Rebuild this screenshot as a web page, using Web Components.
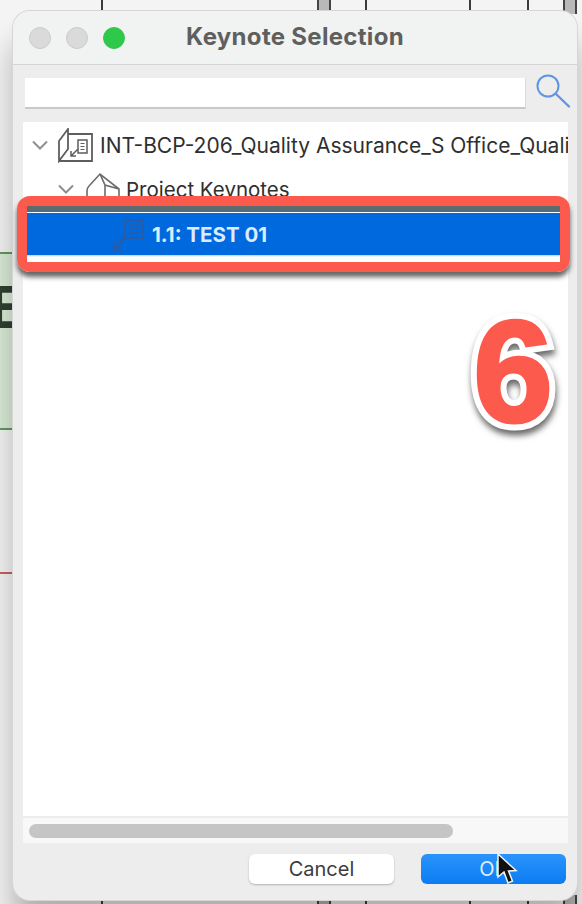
<!doctype html>
<html>
<head>
<meta charset="utf-8">
<title>Keynote Selection</title>
<style>
  html, body { margin: 0; height: 100%; }
  body { font-family: "Inter", "Liberation Sans", sans-serif; overflow: hidden; }
</style>

<template id="backdrop-tpl">
  <style>
    :host { position: absolute; inset: 0; display: block; overflow: hidden; background: #f4f4f4; }
    .v { position: absolute; width: 2px; background: #3b3b3b; }
    .bar { position: absolute; width: 14px; background: #b9b9b9; border: solid #444; border-width: 0 2px; box-sizing: border-box; }
    .top { top: 0; height: 14px; }
    .bot { top: 895px; height: 9px; }
    .green { position: absolute; left: 0; top: 252px; width: 13px; height: 178px; box-sizing: border-box; overflow: hidden;
      background: #d9ecd6; border: solid #5f9a5c; border-width: 2px 0; }
    .e { position: absolute; left: -11px; top: 22px; font: 700 62px/62px "Liberation Sans", sans-serif; color: #2f4030; }
    .red { position: absolute; left: 0; top: 572px; width: 13px; height: 2px; background: #c9605c; }
  </style>
  <div class="v top" style="left:101px"></div>
  <div class="bar top" style="left:317px"></div>
  <div class="v top" style="left:365px"></div>
  <div class="v top" style="left:469px"></div>
  <div class="v top" style="left:527px"></div>
  <div class="bar top" style="left:563px"></div>
  <div class="green"><div class="e">E</div></div>
  <div class="red"></div>
  <div class="v bot" style="left:101px"></div>
  <div class="bar bot" style="left:317px"></div>
  <div class="v bot" style="left:365px"></div>
  <div class="v bot" style="left:469px"></div>
  <div class="v bot" style="left:527px"></div>
  <div class="bar bot" style="left:563px"></div>
</template>

<template id="title-tpl">
  <style>
    :host { display: flex; align-items: center; height: 53px; padding-left: 16px; position: relative;
      background: #f1f2f2; border-bottom: 1px solid #d5d5d5; border-radius: 17px 17px 0 0; }
    .light { width: 22px; height: 22px; border-radius: 50%; background: #dadada; border: 1px solid #cbcbcb;
      box-sizing: border-box; margin-right: 15px; }
    .light.on { background: #2ec84a; border-color: #37c552; }
    .name { position: absolute; left: 0; right: 0; top: 0; height: 53px; text-align: center;
      font: 700 24px/51px "Inter", "Liberation Sans", sans-serif; letter-spacing: .3px; color: #5f5f5f; }
  </style>
  <div class="light"></div><div class="light"></div><div class="light on"></div>
  <div class="name"><slot></slot></div>
</template>

<template id="search-tpl">
  <style>
    :host { display: flex; align-items: center; height: 57px; padding-left: 12px; }
    .field { width: 501px; height: 31px; box-sizing: border-box; background: #fff; border-bottom: 2px solid #c9c9c9;
      border-right: 1px solid #dcdcdc; }
    svg { margin-left: 9px; margin-top: -6px; }
  </style>
  <div class="field"></div>
  <svg width="36" height="36" viewBox="0 0 36 36" fill="none" stroke="#5f95e3">
    <circle cx="13" cy="13" r="10.5" stroke-width="2"/>
    <path d="M21 21 L34 33.5" stroke-width="2.4" stroke-linecap="round"/>
  </svg>
</template>

<template id="row-tpl">
  <style>
    :host { display: flex; align-items: center; height: 44px; white-space: nowrap; overflow: hidden;
      font: 400 20.5px "Inter", "Liberation Sans", sans-serif; color: #2f2f2f; }
    :host([selected]) { background: #0069de; color: #dcecff; font-weight: 700; font-size: 20.5px; height: 43px; margin-top: 2px; }
    ::slotted(svg) { flex: none; }
  </style>
  <slot name="chev"></slot><slot name="icon"></slot><span><slot></slot></span>
</template>

<template id="button-tpl">
  <style>
    :host { display: flex; align-items: center; justify-content: center; width: 145px; height: 30px; border-radius: 6px;
      background: #fff; color: #3c3c3c; font: 400 20px "Inter", "Liberation Sans", sans-serif;
      box-shadow: 0 1px 2px rgba(0,0,0,.25); }
    :host([primary]) { background: linear-gradient(#2b94fb, #0b7cf4); color: #dfeeff; box-shadow: none; }
  </style>
  <slot></slot>
</template>

<template id="window-tpl">
  <style>
    :host { position: absolute; left: 13px; top: 11px; width: 564px; height: 889px; display: flex; flex-direction: column;
      background: #ededed; border-radius: 17px; box-shadow: 0 0 0 1px #d6d6d6, 0 30px 30px rgba(0,0,0,.28); }
    .tree { height: 694px; margin: 0 9px 0 10px; background: #fff; padding-top: 1px; box-sizing: border-box; overflow: hidden; }
    .scroll { height: 25px; margin: 2px 9px 0 10px; background: #f8f8f8; padding-top: 6px; box-sizing: border-box; }
    .thumb { width: 424px; height: 14px; margin-left: 6px; border-radius: 7px; background: #c5c5c5; }
    .actions { display: flex; justify-content: flex-end; gap: 27px; padding: 11px 11px 0 0; }
  </style>
  <slot name="title"></slot>
  <slot name="search"></slot>
  <div class="tree"><slot name="rows"></slot></div>
  <div class="scroll"><div class="thumb"></div></div>
  <div class="actions"><slot name="actions"></slot></div>
</template>

<template id="callout-tpl">
  <style>
    :host { position: absolute; left: 17px; top: 196px; width: 553px; height: 76px; box-sizing: border-box;
      border: 10px solid #fd5a4e; border-radius: 13px; box-shadow: 0 5px 5px rgba(50,50,50,.75); }
    .strip { height: 6px; background: linear-gradient(#5f6a6c 0, #5f6a6c 3px, #3f6f9f 6px); }
    .gap { position: absolute; left: 0; right: 0; top: 49px; height: 7px; background: linear-gradient(#a5d3fb 0, #fff 2px); }
  </style>
  <div class="strip"></div><div class="gap"></div>
</template>

<template id="step-tpl">
  <style>
    :host { position: absolute; left: 473px; top: 290px; display: block; font: 700 144px/165px "Liberation Sans", sans-serif;
      color: #fd5a4e; -webkit-text-stroke: 15px #fff; paint-order: stroke fill; filter: drop-shadow(1px 5px 3px rgba(40,40,40,.7)); }
    :host::after { content: "6"; position: absolute; left: 0; top: 0; -webkit-text-stroke: 3px #fd5a4e; }
  </style>
  <slot></slot>
</template>

<template id="cursor-tpl">
  <style>
    :host { position: absolute; left: 496px; top: 853px; display: block; width: 24px; height: 34px; }
  </style>
  <svg width="24" height="34" viewBox="0 0 24 34">
    <path d="M2 1 L2 24 L8 19 L12 30 L16.500 28 L12.500 18 L20 17.500 Z" fill="#111" stroke="#f4f4f4" stroke-width="1.500"/>
  </svg>
</template>
</head>
<body>
<app-backdrop></app-backdrop>
<keynote-window>
  <title-bar slot="title">Keynote Selection</title-bar>
  <search-bar slot="search"></search-bar>

  <tree-row slot="rows" style="font-size:21px">
    <svg slot="chev" width="16" height="10" viewBox="0 0 16 10" style="margin:0 10px 0 9px" fill="none" stroke="#8e8e8e" stroke-width="2"><path d="M1 1.500 L8 8.500 L15 1.500"/></svg>
    <svg slot="icon" width="36" height="35" viewBox="0 0 36 35" style="margin-right:6px" fill="none" stroke="#5e5e5e" stroke-width="1.800"><path d="M1 13 L10 1 V21 L1 33 Z M10 6 H34 V33 H1"/><path d="M20 12 H29 V25 H20 Z" stroke-width="1.500"/><path d="M22.500 15.500 H26.500 M22.500 18.500 H26.500 M22.500 21.500 H26.500" stroke-width="1.200"/><path d="M20 21 L13 28 M13 23 V28 H18" stroke-width="1.500"/></svg>
    INT-BCP-206_Quality Assurance_S Office_Quality
  </tree-row>
  <tree-row slot="rows">
    <svg slot="chev" width="16" height="10" viewBox="0 0 16 10" style="margin:0 12px 0 35px" fill="none" stroke="#8e8e8e" stroke-width="2"><path d="M1 1.500 L8 8.500 L15 1.500"/></svg>
    <svg slot="icon" width="35" height="34" viewBox="0 0 35 34" style="margin-right:5px" fill="none" stroke="#6c6c6c" stroke-width="1.600"><path d="M1 33 V19 Q1 16 3 14 L14 2 L33 17 V33 M14 2 L19 13 L33 17 M19 13 V33"/></svg>
    Project Keynotes
  </tree-row>
  <tree-row slot="rows" selected>
    <svg slot="icon" width="33" height="34" viewBox="0 0 33 34" style="margin:0 7px 0 89px" fill="none" stroke="#2a5ca6" stroke-width="2"><path d="M13 2 H31 V20 H13 Z"/><path d="M17 7 H27 M17 11 H27 M17 15 H27" stroke-width="1.500"/><path d="M13 18 L2 32 M2 24 V32 H11" stroke-width="2.200"/></svg>
    1.1: TEST 01
  </tree-row>

  <push-button slot="actions">Cancel</push-button>
  <push-button slot="actions" primary>OK</push-button>
</keynote-window>
<call-out></call-out>
<step-number>6</step-number>
<mouse-cursor></mouse-cursor>

<script>
  function stamp(el, id) {
    let shadowRoot = el.attachShadow({mode: 'open'});
    shadowRoot.appendChild(document.querySelector(id).content.cloneNode(true));
  }
  const parts = {
    'app-backdrop': '#backdrop-tpl',
    'title-bar': '#title-tpl',
    'search-bar': '#search-tpl',
    'tree-row': '#row-tpl',
    'push-button': '#button-tpl',
    'keynote-window': '#window-tpl',
    'call-out': '#callout-tpl',
    'step-number': '#step-tpl',
    'mouse-cursor': '#cursor-tpl'
  };
  for (const name in parts) {
    customElements.define(name, class extends HTMLElement {
      constructor() {
        super();
        stamp(this, parts[name]);
      }
    });
  }
</script>
</body>
</html>
